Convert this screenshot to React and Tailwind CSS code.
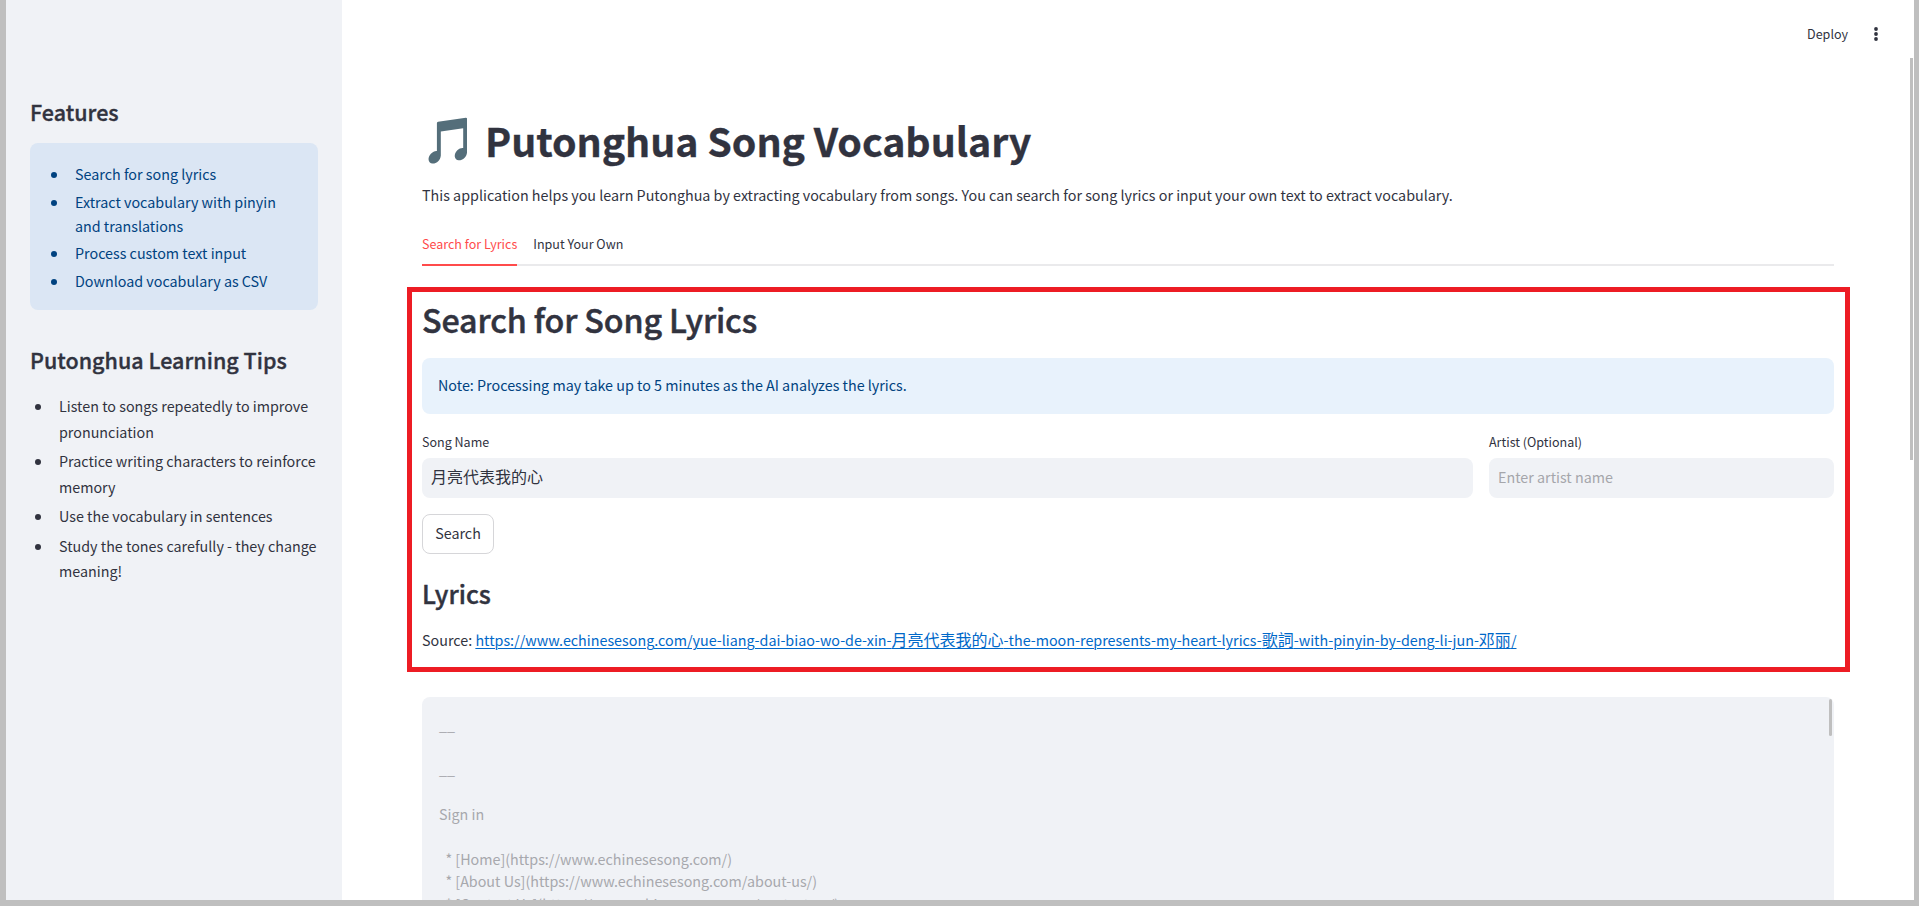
const features = [
  "Search for song lyrics",
  "Extract vocabulary with pinyin and translations",
  "Process custom text input",
  "Download vocabulary as CSV",
];

const tips = [
  "Listen to songs repeatedly to improve pronunciation",
  "Practice writing characters to reinforce memory",
  "Use the vocabulary in sentences",
  "Study the tones carefully - they change meaning!",
];

const lyrics = `__

__

Sign in

  * [Home](https://www.echinesesong.com/)
  * [About Us](https://www.echinesesong.com/about-us/)
  * [Contact Us](https://www.echinesesong.com/contact-us/)`;

function Bullet({ className }) {
  return <span className={`-ml-px size-1.5 shrink-0 rounded-full bg-current ${className}`} />;
}

function Sidebar() {
  return (
    <aside className="w-[336px] shrink-0 bg-[#f0f2f6] px-6 pt-[97px]">
      <h2 className="text-[21.48px] leading-[29px] font-medium tracking-[0.03px] [-webkit-text-stroke:0.35px]">
        Features
      </h2>
      <ul className="mt-[17px] flex h-[167px] flex-col gap-[3.7px] rounded-lg bg-[#dbe6f4] pt-[19px] pr-4 pl-[22px] text-[#004280]">
        {features.map((text) => (
          <li key={text} className="flex leading-6">
            <Bullet className="mt-[10px] mr-[18px]" />
            {text}
          </li>
        ))}
      </ul>
      <h2 className="mt-[35px] text-[21.48px] leading-[29px] font-medium tracking-[0.03px] [-webkit-text-stroke:0.35px]">
        Putonghua Learning Tips
      </h2>
      <ul className="mt-[19.2px] flex flex-col gap-[3.8px]">
        {tips.map((text) => (
          <li key={text} className="flex pl-1.5 leading-[25.6px]">
            <Bullet className="mt-[11px] mr-[18px]" />
            {text}
          </li>
        ))}
      </ul>
    </aside>
  );
}

function Field({ label, className, children }) {
  return (
    <div className={className}>
      <div className="mb-1.5 text-[12.53px] leading-5">{label}</div>
      <div className="flex h-10 items-center rounded-lg bg-[#f0f2f6] px-[9px] pb-0.5">
        {children}
      </div>
    </div>
  );
}

function Cjk({ children }) {
  return <span className="text-base leading-none">{children}</span>;
}

export default function App() {
  return (
    <div className="h-[906px] w-[1919px] overflow-hidden border-t-0 border-r-[5px] border-b-[6px] border-l-[6px] border-[#bfbfbf] bg-white font-['Noto_Sans_CJK_SC',sans-serif] text-[14.32px] text-[#31333f]">
      <div className="relative flex h-full">
        <Sidebar />
        <main className="flex-1 overflow-hidden pr-20 pl-20">
          <header className="-mr-[44px] flex h-[68px] items-center justify-end gap-[26px]">
            <span className="text-[12.53px] leading-5">Deploy</span>
            <svg className="h-4 w-1" viewBox="0 0 4 16" fill="currentColor">
              <circle cx="2" cy="3" r="1.9" />
              <circle cx="2" cy="8" r="1.9" />
              <circle cx="2" cy="13" r="1.9" />
            </svg>
          </header>

          <h1 className="mt-[45px] -ml-px flex h-[52px] items-center gap-2 text-[39.38px] leading-[52px] font-bold tracking-[-0.07px] whitespace-nowrap">
            <span className="pb-[5px] text-[45px]">🎵</span>
            <span className="pt-px [-webkit-text-stroke:0.3px]">Putonghua Song Vocabulary</span>
          </h1>
          <p className="mt-[18px] leading-6">
            This application helps you learn Putonghua by extracting vocabulary from songs. You can
            search for song lyrics or input your own text to extract vocabulary.
          </p>

          <nav className="mt-[17px] flex h-[42px] gap-4 border-b-2 border-[#eaeaec] text-[12.53px]">
            <span className="flex h-[42px] items-center border-b-2 border-[#ff4b4b] text-[#ff4b4b]">
              Search for Lyrics
            </span>
            <span className="flex h-10 items-center">Input Your Own</span>
          </nav>

          <section>
            <h2 className="mt-8 text-[32.22px] leading-[43px] font-medium tracking-[-0.12px] [-webkit-text-stroke:0.5px]">
              Search for Song Lyrics
            </h2>
            <div className="mt-[17px] flex h-14 items-center rounded-lg bg-[#e8f2fc] px-4 pb-0.5 text-[#004280]">
              Note: Processing may take up to 5 minutes as the AI analyzes the lyrics.
            </div>
            <div className="mt-[18px] flex gap-4">
              <Field label="Song Name" className="w-[1051px]">
                <span className="pb-0.5 text-base leading-6">月亮代表我的心</span>
              </Field>
              <Field label="Artist (Optional)" className="flex-1">
                <span className="text-[#a5a6ab]">Enter artist name</span>
              </Field>
            </div>
            <button className="mt-4 flex h-10 w-[72px] items-center justify-center rounded-lg border border-[#d6d6d9] pb-0.5">
              Search
            </button>
            <h3 className="mt-[22px] text-[25.06px] leading-[34px] font-medium [-webkit-text-stroke:0.4px]">
              Lyrics
            </h3>
            <p className="mt-[18px] h-6 leading-6 whitespace-nowrap">
              Source:{" "}
              <a className="text-[#0068c9] underline decoration-1 underline-offset-2">
                https://www.echinesesong.com/yue-liang-dai-biao-wo-de-xin-<Cjk>月亮代表我的心</Cjk>
                -the-moon-represents-my-heart-lyrics-<Cjk>歌詞</Cjk>-with-pinyin-by-deng-li-jun-
                <Cjk>邓丽</Cjk>/
              </a>
            </p>
          </section>

          <div className="relative mt-[45px] h-[300px] rounded-lg bg-[#f0f2f6] px-[17px] pt-[16.6px]">
            <pre className="font-['Noto_Sans_CJK_SC',sans-serif] leading-[22.4px] text-[#a7a8ad]">
              {lyrics}
            </pre>
            <span className="absolute top-[2px] right-[2px] h-[37px] w-[3px] rounded-full bg-[#bfbfbf]" />
          </div>
        </main>

        <span className="absolute top-[58px] right-[1px] h-[402px] w-[3px] bg-[#bfbfbf]" />
        <div className="absolute top-[287px] left-[401px] h-[385px] w-[1443px] border-[5px] border-[#ed1c24]" />
      </div>
    </div>
  );
}
